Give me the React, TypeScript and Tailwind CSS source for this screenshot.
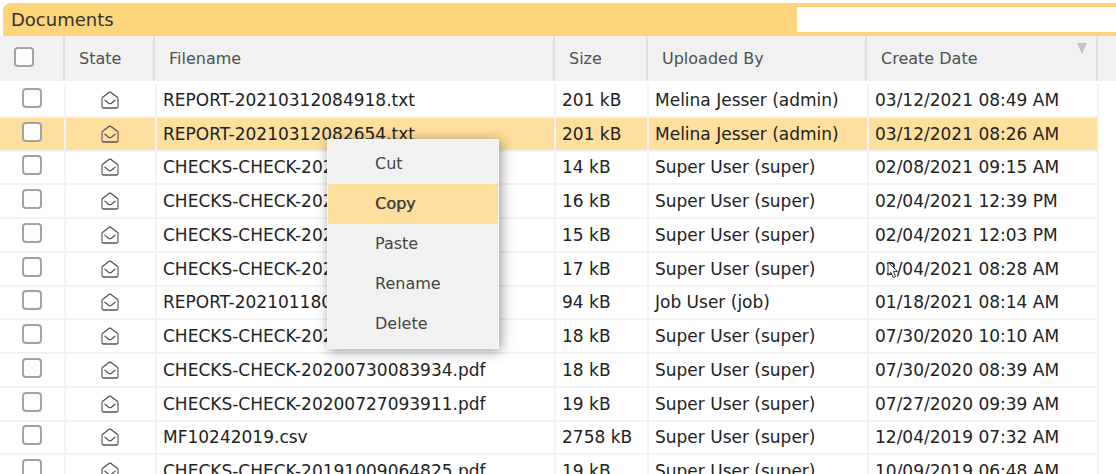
type Doc = { name: string; size: string; by: string; date: string; selected?: boolean };

const docs: Doc[] = [
  { name: 'REPORT-20210312084918.txt', size: '201 kB', by: 'Melina Jesser (admin)', date: '03/12/2021 08:49 AM' },
  { name: 'REPORT-20210312082654.txt', size: '201 kB', by: 'Melina Jesser (admin)', date: '03/12/2021 08:26 AM', selected: true },
  { name: 'CHECKS-CHECK-20210208091523.pdf', size: '14 kB', by: 'Super User (super)', date: '02/08/2021 09:15 AM' },
  { name: 'CHECKS-CHECK-20210204123911.pdf', size: '16 kB', by: 'Super User (super)', date: '02/04/2021 12:39 PM' },
  { name: 'CHECKS-CHECK-20210204120345.pdf', size: '15 kB', by: 'Super User (super)', date: '02/04/2021 12:03 PM' },
  { name: 'CHECKS-CHECK-20210204082817.pdf', size: '17 kB', by: 'Super User (super)', date: '02/04/2021 08:28 AM' },
  { name: 'REPORT-20210118081402.txt', size: '94 kB', by: 'Job User (job)', date: '01/18/2021 08:14 AM' },
  { name: 'CHECKS-CHECK-20200730101026.pdf', size: '18 kB', by: 'Super User (super)', date: '07/30/2020 10:10 AM' },
  { name: 'CHECKS-CHECK-20200730083934.pdf', size: '18 kB', by: 'Super User (super)', date: '07/30/2020 08:39 AM' },
  { name: 'CHECKS-CHECK-20200727093911.pdf', size: '19 kB', by: 'Super User (super)', date: '07/27/2020 09:39 AM' },
  { name: 'MF10242019.csv', size: '2758 kB', by: 'Super User (super)', date: '12/04/2019 07:32 AM' },
  { name: 'CHECKS-CHECK-20191009064825.pdf', size: '19 kB', by: 'Super User (super)', date: '10/09/2019 06:48 AM' },
];

const actions = ['Cut', 'Copy', 'Paste', 'Rename', 'Delete'];

function Tick({ label }: { label: string }) {
  return (
    <input
      type="checkbox"
      aria-label={label}
      className="block size-5 appearance-none rounded-[4px] border-2 border-[#a3a3a3] bg-white checked:bg-[#ffd57b]"
    />
  );
}

function OpenEnvelope() {
  return (
    <svg viewBox="0 0 18 18" className="block size-[18px]" fill="none" strokeWidth="1.3" strokeLinejoin="round" aria-hidden="true">
      <path d="M1 15.6V6.8M17 6.8V15.6" stroke="#8a5590" />
      <path d="M1 6.8 8 1.4Q9 .7 10 1.4L17 6.8M1 15.6Q1 17 2.4 17H15.6Q17 17 17 15.6" stroke="#555" />
      <path d="M4 9.2 7.6 12.2Q9 13.2 10.4 12.2L14 9.2" stroke="#555" strokeLinecap="round" />
    </svg>
  );
}

function Cursor() {
  return (
    <svg viewBox="0 0 12 18" className="h-[18px] w-3" fill="#fff" stroke="#333" strokeWidth="1" aria-hidden="true">
      <path d="M1 1V14.2L4 11.4L6.2 16.6L8.6 15.6L6.4 10.6H10.6Z" />
    </svg>
  );
}

function ContextMenu() {
  return (
    <div
      role="menu"
      aria-label="Document actions"
      className="absolute left-[327px] top-[139px] z-20 flex w-[172px] flex-col border border-[#f7f7f7] bg-[#f1f1f1] py-1 shadow-[2px_2px_12px_rgba(0,0,0,0.4)]"
    >
      {actions.map((a) => (
        <button
          key={a}
          type="button"
          role="menuitem"
          className={
            a === 'Copy'
              ? 'h-10 bg-[#ffdf9e] pl-[47px] text-left text-base text-[#333] [text-shadow:1px_0_0_rgba(51,51,51,0.4)]'
              : 'h-10 pl-[47px] text-left text-base text-[#444]'
          }
        >
          {a}
        </button>
      ))}
    </div>
  );
}

export default function App() {
  const th = 'border-r-2 border-[#e0e0e0] pl-[14px] text-left font-normal';
  const td = 'border-r-2 border-b-2 border-[#f3f3f3] pl-[6px] whitespace-nowrap';
  return (
    <main className="relative flex h-screen flex-col overflow-hidden bg-white pt-[3px] font-['DejaVu_Sans',Verdana,sans-serif]">
      <header className="ml-[3px] flex h-[33px] shrink-0 items-center justify-between rounded-tl-lg bg-[#ffd57b] pl-2">
        <h1 className="text-lg text-[#333]">Documents</h1>
        <input type="search" aria-label="Search documents" className="h-[25px] w-[319px] bg-white px-2 text-base outline-none" />
      </header>

      <table className="w-full shrink-0 table-fixed border-separate border-spacing-0 bg-[#f1f1f1] text-base text-[#505050]">
        <colgroup>
          <col className="w-[65px]" />
          <col className="w-[90px]" />
          <col />
          <col className="w-[93px]" />
          <col className="w-[219px]" />
          <col className="w-[231px]" />
          <col className="w-[18px]" />
        </colgroup>
        <thead>
          <tr className="h-[45px]">
            <th className="border-r-2 border-[#e0e0e0] pb-1 pl-[14px]"><Tick label="Select all documents" /></th>
            <th className={th}>State</th>
            <th className={th}>Filename</th>
            <th className={th}>Size</th>
            <th className={th}>Uploaded By</th>
            <th className={th} aria-sort="descending">
              <div className="flex justify-between pr-2">
                Create Date
                <svg viewBox="0 0 12 24" className="-my-1 h-6 w-3" fill="#c4c4c4" aria-hidden="true"><path d="M1 0H11L6 11Z" /></svg>
              </div>
            </th>
            <td />
          </tr>
        </thead>
      </table>

      <div className="mt-[3px] min-h-0 flex-1 overflow-hidden pr-[17px]">
        <table aria-label="Documents" className="h-[405px] w-full table-fixed border-separate border-spacing-0 text-[17px] leading-6 text-[#222]">
          <colgroup>
            <col className="w-[66px]" />
            <col className="w-[91px]" />
            <col />
            <col className="w-[93px]" />
            <col className="w-[220px]" />
            <col className="w-[230px]" />
          </colgroup>
          <tbody>
            {docs.map((d) => (
              <tr key={d.name} className={d.selected ? 'bg-[#ffdf9e]' : 'bg-white'}>
                <td className="border-r-2 border-b-2 border-[#f3f3f3] pb-1 pl-[22px]"><Tick label={'Select ' + d.name} /></td>
                <td className="border-r-2 border-b-2 border-[#f3f3f3] pl-[35px]"><OpenEnvelope /></td>
                <td className={td}>{d.name}</td>
                <td className={td}>{d.size}</td>
                <td className={td}>{d.by}</td>
                <td className={td}>
                  <div className="relative">
                    {d.date}
                    {d.date === '02/04/2021 08:28 AM' && <span className="absolute left-3 top-1"><Cursor /></span>}
                  </div>
                </td>
              </tr>
            ))}
          </tbody>
        </table>
      </div>

      <ContextMenu />
    </main>
  );
}
